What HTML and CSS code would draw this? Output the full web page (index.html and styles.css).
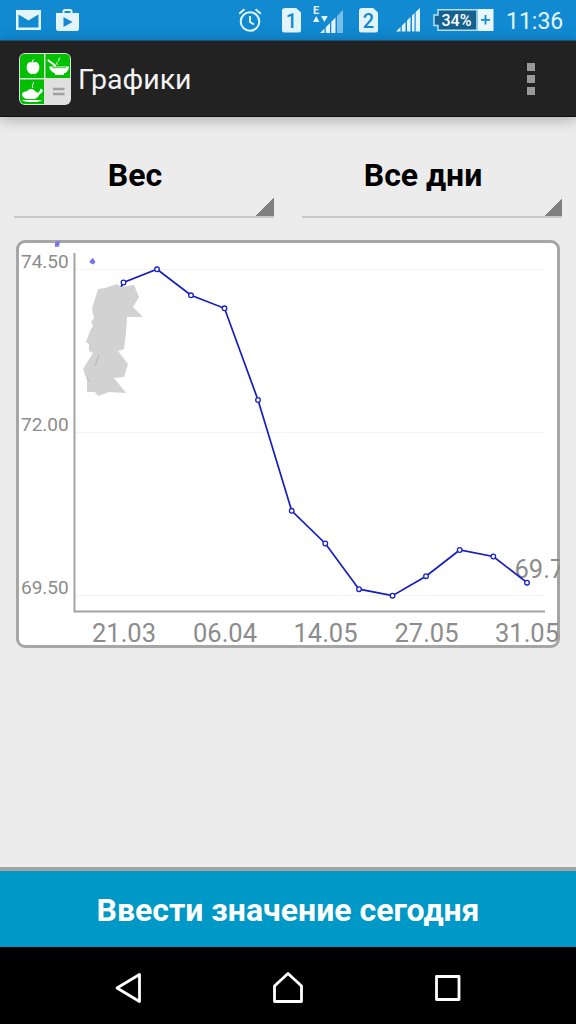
FILE: index.html
```
<!DOCTYPE html>
<html lang="ru">
<head>
  <meta charset="UTF-8" />
  <meta name="viewport" content="width=device-width, initial-scale=1.0"/>
  <title>Графики</title>
  <link rel="stylesheet" href="styles.css">
</head>
<body>
  <div class="status-bar">
    <div class="status-group notifications">
      <svg width="25" height="20" viewBox="0 0 25 20">
        <rect x="1.25" y="1.25" width="22.5" height="17.5" fill="none" stroke="#e4f4fb" stroke-width="2.5"/>
        <path d="M1 1H24V3.5L12.5 10.5L1 3.5Z" fill="#e4f4fb"/>
      </svg>
      <svg width="23" height="22" viewBox="0 0 23 22">
        <path d="M7.5 5V2.8Q7.5 1 9 1H14Q15.500 1 15.500 2.800V5" fill="none" stroke="#e4f4fb" stroke-width="2"/>
        <path d="M0 4H23V19.500Q23 22 20.500 22H2.500Q0 22 0 19.500Z" fill="#e4f4fb"/>
        <path d="M7.500 8L16.500 13L7.500 18Z" fill="#118ad2"/>
      </svg>
    </div>
    <div class="status-group system">
      <svg class="alarm" width="24" height="24" viewBox="0 0 24 24" fill="none" stroke="#e4f4fb" stroke-width="2">
        <circle cx="12" cy="13.500" r="9.300"/>
        <path d="M12 8V14L16 16.500M1.200 5.800L6.500 1.300M22.800 5.800L17.500 1.300"/>
      </svg>
      <span class="sim">1</span>
      <svg class="signal-one" width="31" height="28" viewBox="0 0 31 28">
        <text x="0" y="9" font-size="11" font-weight="bold" fill="#e4f4fb">E</text>
        <path d="M0 17L3.200 11L6.400 17ZM8 11H14.800L11.400 17Z" fill="#e4f4fb"/>
        <path d="M7 28L11.500 23.500V28ZM12.800 22.200L17 18V28H12.800ZM18.300 16.700L22.500 12.500V28H18.300Z" fill="#e4f4fb"/>
        <path d="M24 11L30 5V28H24Z" fill="#78bfe8"/>
      </svg>
      <span class="sim second">2</span>
      <svg class="signal-two" width="24" height="24" viewBox="0 0 24 24" fill="#e4f4fb">
        <path d="M0 23.500L4.500 19V23.500ZM5.800 17.700L9.500 14V23.500H5.800ZM11 12.500L14.500 9V23.500H11ZM16 7.500L18.500 5V23.500H16ZM19.700 4L24 0V23.500H19.700Z"/>
      </svg>
      <svg class="battery" width="61" height="22" viewBox="0 0 61 22">
        <path d="M5 .75H44V21.250H5V16.500H1V6H5Z" fill="#17618f" stroke="#b4e1f5" stroke-width="1.500"/>
        <rect x="45" width="15.500" height="22" fill="#e9f8ff"/>
        <path d="M52.500 6V15.500M48 10.800H57" stroke="#118ad2" stroke-width="1.800"/>
        <text x="8.500" y="17" font-size="16" font-weight="500" fill="#fff" textLength="30" lengthAdjust="spacingAndGlyphs">34%</text>
      </svg>
      <span class="clock">11:36</span>
    </div>
  </div>

  <header class="action-bar">
    <svg class="logo" width="52" height="52" viewBox="0 0 52 52">
      <rect width="52" height="52" rx="6" fill="#e0e0e0"/>
      <path d="M1 25V6Q1 1 6 1H25V25ZM26.500 25V1H46Q51 1 51 6V25ZM1 26.500H25V51H6Q1 51 1 46Z" fill="#00c000"/>
      <!-- apple -->
      <path d="M13.500 10Q16.500 8 19 10Q21.500 13 19.500 18Q17 22.500 14 20.800Q11 22.500 8.500 18Q6.500 13 9 10Q11.500 8 13.500 10Z" fill="#fff"/>
      <path d="M13.500 10Q13 8 14.500 6.500" stroke="#fff" stroke-width="1.200" fill="none"/>
      <!-- bowl -->
      <path d="M30 13.500H50Q49.500 19 45 20.500V22H36V20.500Q31 18.500 30 13.500Z" fill="#fff"/>
      <path d="M33 14.700H47" stroke="#00c000" stroke-width=".8"/>
      <path d="M29.500 7.500L36 12.500" stroke="#fff" stroke-width="2.200" stroke-linecap="round"/>
      <path d="M38.500 12Q36.500 10 39 8.500M40 8Q39 6 41 4.500" stroke="#fff" fill="none"/>
      <!-- roast chicken -->
      <path d="M3 42Q3 38 7.500 38.500Q12 34 16 38L19 40L21 37.500L21.500 35.500L24 37L23 39.500L20 42Q19 45 15 46H8Q4 45 3 42Z" fill="#fff"/>
      <path d="M3 47H23Q20 49.500 13 49Q5 49 3 47Z" fill="#fff"/>
      <path d="M14 35Q12.500 33 14 31.500Q15 30.500 14 29" stroke="#fff" fill="none"/>
      <path d="M34 36H45.500M34 41H45.500" stroke="#a0a0a0" stroke-width="2.400"/>
    </svg>
    <h1 class="title">Графики</h1>
    <button class="overflow" aria-label="Меню"><i></i><i></i><i></i></button>
  </header>

  <main class="content">
    <div class="filters">
      <button class="spinner">Вес</button>
      <button class="spinner">Все дни</button>
    </div>

    <svg class="chart" width="544" height="408" viewBox="16 240 544 408">
      <rect class="frame" x="17.500" y="241.500" width="541" height="405" rx="7.500"/>
      <path class="grid" d="M75 269.500H545M75 432.500H545M75 595.500H545"/>
      <path class="axis" d="M74.500 253V611.500H545"/>
      <g class="y-labels">
        <text x="21" y="268">74.50</text>
        <text x="21" y="431">72.00</text>
        <text x="21" y="594">69.50</text>
      </g>
      <g class="x-labels">
        <text x="124" y="642">21.03</text>
        <text x="225" y="642">06.04</text>
        <text x="325.500" y="642">14.05</text>
        <text x="426.500" y="642">27.05</text>
        <text x="527" y="642">31.05</text>
      </g>
      <text class="last-value" x="514.500" y="578">69.7</text>
      <polyline class="line" points="121,287 123.500,282.500 157,269.300 191,295.300 224.500,308.300 258,400 291.700,510.800 325.300,543.500 359,589.200 392.500,595.700 426,576.200 459.700,550 493.300,556.500 527,582.700"/>
      <g class="points">
        <circle cx="123.500" cy="282.500" r="2.300"/>
        <circle cx="157" cy="269.300" r="2.300"/>
        <circle cx="191" cy="295.300" r="2.300"/>
        <circle cx="224.500" cy="308.300" r="2.300"/>
        <circle cx="258" cy="400" r="2.300"/>
        <circle cx="291.700" cy="510.800" r="2.300"/>
        <circle cx="325.300" cy="543.500" r="2.300"/>
        <circle cx="359" cy="589.200" r="2.300"/>
        <circle cx="392.500" cy="595.700" r="2.300"/>
        <circle cx="426" cy="576.200" r="2.300"/>
        <circle cx="459.700" cy="550" r="2.300"/>
        <circle cx="493.300" cy="556.500" r="2.300"/>
        <circle cx="527" cy="582.700" r="2.300"/>
      </g>
      <!-- brush marks over the start of the line -->
      <path d="M98 289L105 288L117 284L121 287L134 285L139 297L133 307L143 317L127 317L126 333L124 349L118 351L128 364L124 377L114 378L126 393L109 392L98 396L95 392H87V380L83 369L93 353L89 351V344L86 342L90 331L93 326L91 322L94 318L92 309L94 302Z" fill="#d2d2d2"/>
      <path d="M99 355L95 366M87 378L90 382" stroke="#b5b5b5" fill="none"/>
      <path d="M55 242L60 241L59 246.500L55 247ZM89.500 261L93 258L95.500 262L93.500 264.500L90 263Z" fill="#7476ea"/>
    </svg>
  </main>

  <button class="enter-value">Ввести значение сегодня</button>

  <nav class="nav-bar">
    <svg width="32" height="34" viewBox="0 0 32 34"><path d="M27.500 3.500V30.500L5 17Z"/></svg>
    <svg width="32" height="34" viewBox="0 0 32 34"><path d="M2.500 30.500V15L16 2.500L29.500 15V30.500Z"/></svg>
    <svg width="32" height="34" viewBox="0 0 32 34"><rect x="4.500" y="5.500" width="22.500" height="23"/></svg>
  </nav>
</body>
</html>
```
FILE: styles.css
```
* {
  box-sizing: border-box;
}

body {
  margin: 0;
  height: 100vh;
  display: flex;
  flex-direction: column;
  overflow: hidden;
  font-family: Roboto, sans-serif;
  background: #ececec;
}

button {
  border: none;
  padding: 0;
  background: none;
  font-family: inherit;
}

svg {
  display: block;
  flex: none;
}

/* Status bar */
.status-bar {
  height: 41px;
  flex: none;
  display: flex;
  justify-content: space-between;
  padding: 0 12px 0 16px;
  background: #118ad2;
  border-bottom: 1px solid #1c5b82;
}

.status-group {
  display: flex;
  align-items: center;
}

.notifications {
  gap: 15px;
}

.system {
  color: #e4f4fb;
}

.sim {
  width: 19px;
  height: 25px;
  margin-left: 20px;
  border-radius: 3px;
  background: #e4f4fb;
  clip-path: polygon(0 0, 72% 0, 100% 20%, 100% 100%, 0 100%);
  color: #118ad2;
  font-size: 20px;
  font-weight: 500;
  line-height: 27px;
  text-align: center;
}

.signal-one {
  margin: 0 0 3px 12px;
}

.sim.second {
  margin-left: 15px;
}

.signal-two {
  margin-left: 18px;
}

.battery {
  margin-left: 13px;
}

.clock {
  width: 58px;
  margin-left: 12px;
  padding-top: 2px;
  font-size: 23px;
}

/* Action bar */
.action-bar {
  position: relative;
  height: 76px;
  flex: none;
  display: flex;
  align-items: center;
  padding: 0 41px 0 19px;
  background: #222;
  border-bottom: 1px solid #111;
  box-shadow: 0 2px 14px rgba(0, 0, 0, 0.3);
}

.title {
  margin: 2px 0 0 7px;
  flex: 1;
  font-size: 28.5px;
  font-weight: 400;
  color: #f3f3f3;
}

.overflow {
  display: grid;
  gap: 4px;
}

.overflow i {
  width: 8px;
  height: 8px;
  background: #999;
}

/* Filters and chart */
.content {
  flex: 1;
  padding: 18px 14px 0;
}

.filters {
  display: grid;
  grid-template-columns: 1fr 1fr;
  gap: 28px;
  margin-bottom: 22px;
}

.spinner {
  height: 83px;
  padding: 0 18px 2px 0;
  border-bottom: 2px solid #c8c8c8;
  background: linear-gradient(135deg, transparent 50%, #808080 50%) right bottom / 20px 20px no-repeat border-box;
  font-size: 32px;
  font-weight: 700;
  color: #000;
}

.chart {
  margin-left: 2px;
}

.frame {
  fill: #fff;
  stroke: #a6a6a6;
  stroke-width: 3;
}

.grid {
  stroke: #f3f3f3;
  fill: none;
}

.axis {
  stroke: #a3a3a3;
  stroke-width: 2;
  fill: none;
}

.y-labels {
  fill: #8c8c8c;
  font-size: 19px;
}

.x-labels {
  fill: #8c8c8c;
  font-size: 25.5px;
  text-anchor: middle;
}

.last-value {
  fill: #8c8c8c;
  font-size: 25.5px;
}

.line {
  fill: none;
  stroke: #151ec0;
  stroke-width: 1.7;
}

.points {
  fill: #fff;
  stroke: #1a23c4;
  stroke-width: 1.3;
}

/* Bottom button */
.enter-value {
  height: 80px;
  flex: none;
  padding-top: 2px;
  border-top: 4px solid #a3a3a3;
  background: #0098c6;
  color: #fff;
  font-size: 32px;
  font-weight: 700;
}

/* Navigation bar */
.nav-bar {
  height: 77px;
  flex: none;
  display: flex;
  justify-content: center;
  gap: 128px;
  padding-top: 24px;
  background: #000;
  fill: none;
  stroke: #fff;
  stroke-width: 2.8;
  stroke-linejoin: round;
}
```
